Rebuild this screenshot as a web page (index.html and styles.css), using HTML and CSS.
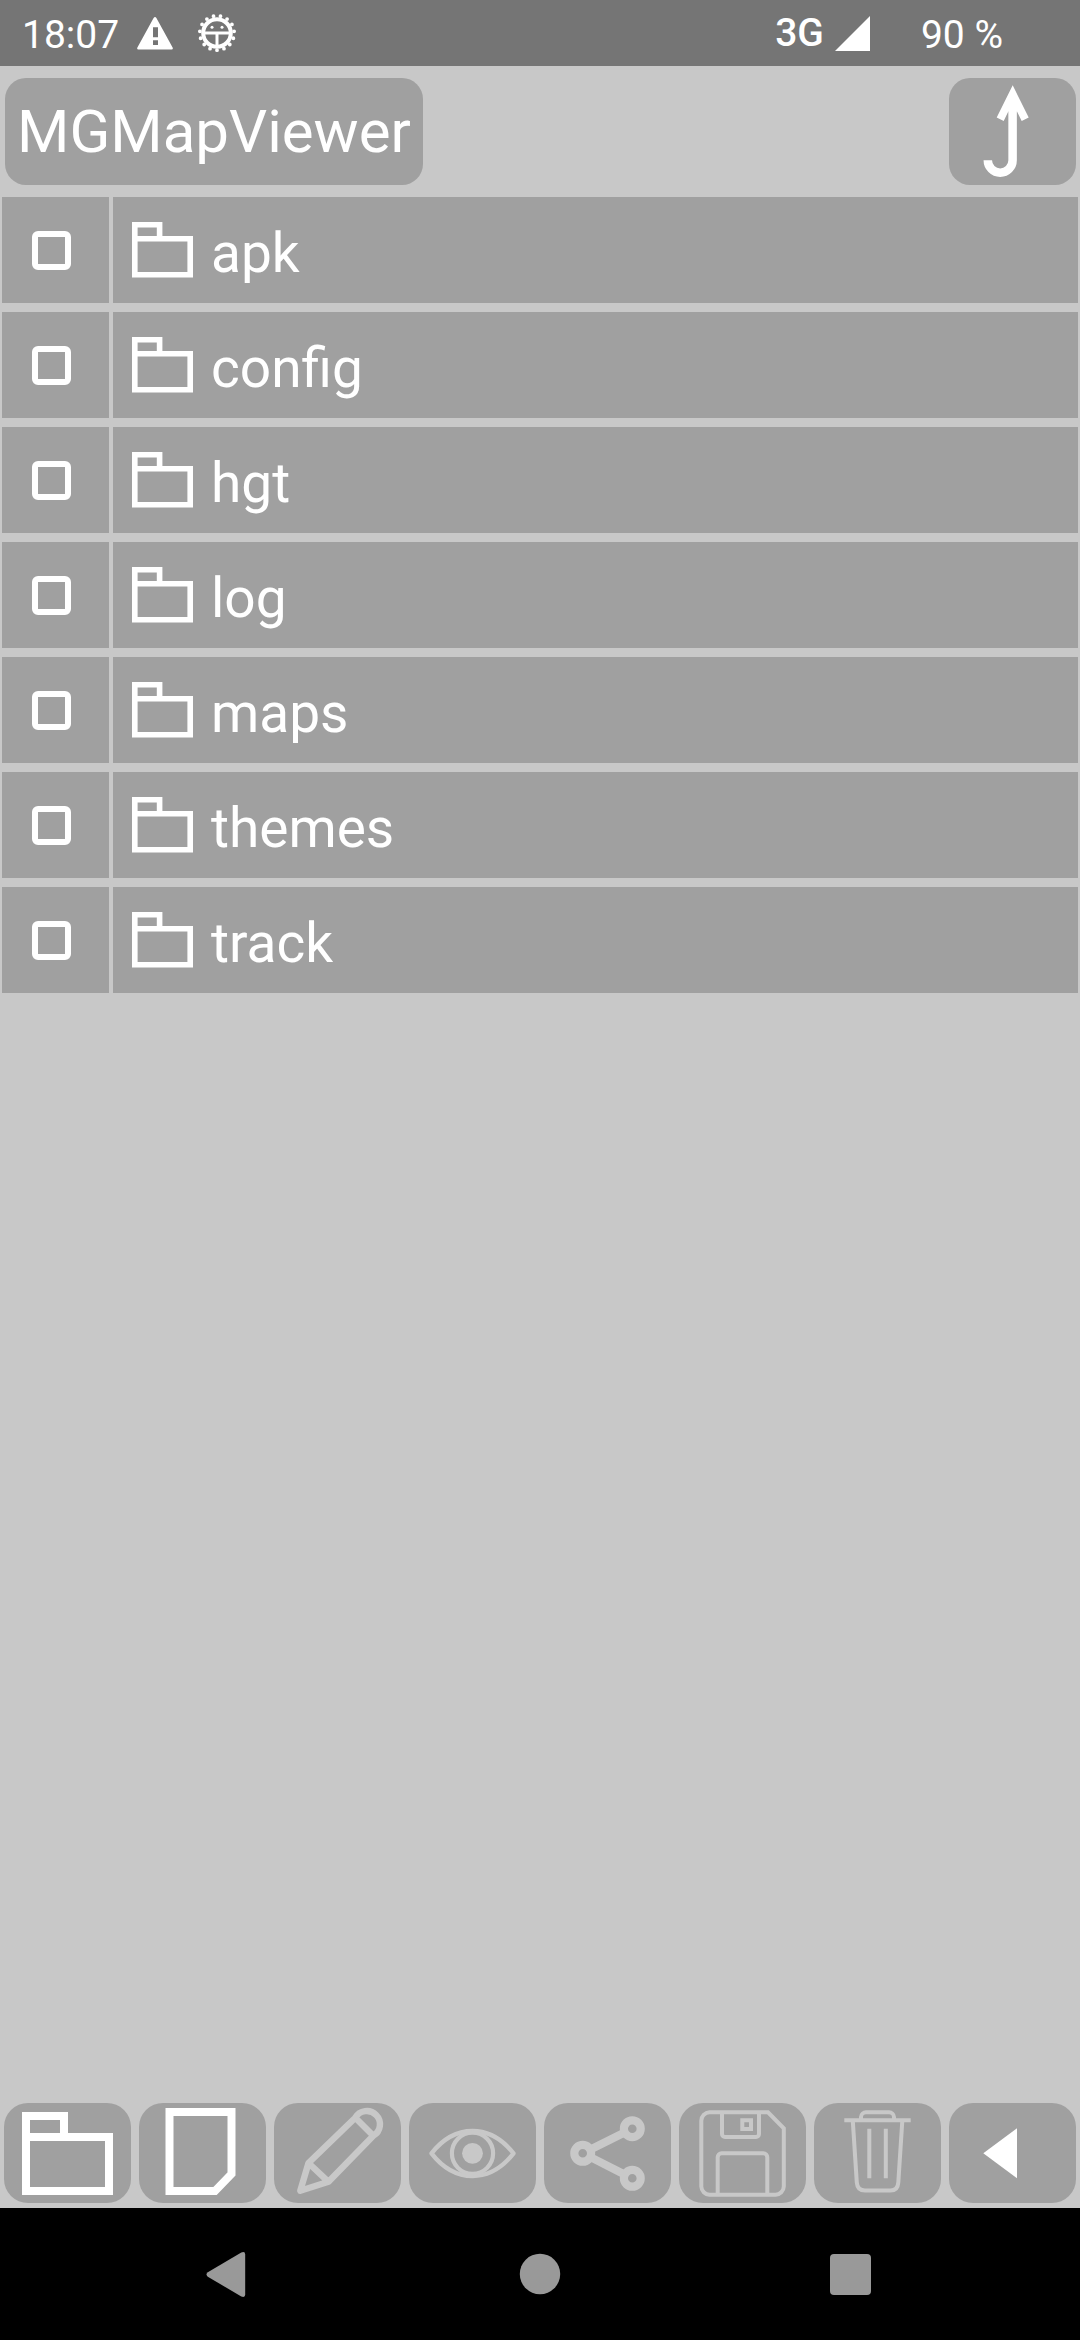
FILE: index.html
```
<!DOCTYPE html>
<html lang="en">
<head>
<meta charset="utf-8">
<meta name="viewport" content="width=device-width, initial-scale=1">
<title>MGMapViewer</title>
<link rel="stylesheet" href="styles.css">
</head>
<body>
<svg class="defs" aria-hidden="true">
  <symbol id="folder" viewBox="0 0 61 56">
    <path d="M2.8 2.8H27.6V16.8H58.2V52.8H2.8ZM2.8 16.8H27.6" fill="none" stroke="currentColor" stroke-width="5.6"/>
  </symbol>
</svg>

<header class="status">
  <span class="status-text">18:07</span>
  <svg class="warning" viewBox="0 0 36 33" aria-hidden="true">
    <path fill="#fff" fill-rule="evenodd" d="M16.6 1Q18 -1 19.4 1L35.6 30.5Q36.4 32.6 34.6 32.6H1.4Q-.4 32.6.4 30.5ZM16 10.300V20.300H21V10.300ZM16 23.300V28H21V23.300Z"/>
  </svg>
  <svg class="gear" viewBox="0 0 40 40" aria-hidden="true">
    <g fill="none" stroke="#fff">
      <circle cx="20" cy="20" r="13.800" stroke-width="4"/>
      <circle cx="20" cy="20" r="17.200" stroke-width="3.800" stroke-linecap="round" pathLength="15" stroke-dasharray="0 1" transform="rotate(90 20 20)"/>
      <path d="M7 19.900H33M20 20V33" stroke-width="3"/>
    </g>
    <circle cx="15" cy="14.300" r="1.500" fill="#fff"/>
    <circle cx="25" cy="14.300" r="1.500" fill="#fff"/>
  </svg>
  <span class="network">3G</span>
  <svg class="signal" viewBox="0 0 35 35" aria-hidden="true"><path fill="#fff" d="M35 0V35H0Z"/></svg>
  <span class="status-text battery">90 %</span>
</header>

<div class="toolbar">
  <button class="btn path" type="button">MGMapViewer</button>
  <button class="btn up" type="button" aria-label="Parent folder">
    <svg viewBox="0 0 127 107">
      <path d="M38.800 82.300A12.400 12.400 0 0 0 63.600 82.300V30" fill="none" stroke="#fff" stroke-width="8.500"/>
      <path fill="#fff" d="M63.700 7.300L79.700 39.600L72.700 43L68 33.500H59.300L54.700 43L47.700 39.600Z"/>
    </svg>
  </button>
</div>

<main>
  <ul class="files">
    <li><label class="pick"><input type="checkbox" aria-label="Select apk"></label><button class="entry" type="button"><svg><use href="#folder"/></svg><span>apk</span></button></li>
    <li><label class="pick"><input type="checkbox" aria-label="Select config"></label><button class="entry" type="button"><svg><use href="#folder"/></svg><span>config</span></button></li>
    <li><label class="pick"><input type="checkbox" aria-label="Select hgt"></label><button class="entry" type="button"><svg><use href="#folder"/></svg><span>hgt</span></button></li>
    <li><label class="pick"><input type="checkbox" aria-label="Select log"></label><button class="entry" type="button"><svg><use href="#folder"/></svg><span>log</span></button></li>
    <li><label class="pick"><input type="checkbox" aria-label="Select maps"></label><button class="entry" type="button"><svg><use href="#folder"/></svg><span>maps</span></button></li>
    <li><label class="pick"><input type="checkbox" aria-label="Select themes"></label><button class="entry" type="button"><svg><use href="#folder"/></svg><span>themes</span></button></li>
    <li><label class="pick"><input type="checkbox" aria-label="Select track"></label><button class="entry" type="button"><svg><use href="#folder"/></svg><span>track</span></button></li>
  </ul>
</main>

<div class="actions" role="toolbar" aria-label="File actions">
  <button class="btn" type="button" aria-label="New folder">
    <svg viewBox="0 0 127 100"><path d="M22 13H60V34H105V88H22ZM22 34H60" stroke-width="8"/></svg>
  </button>
  <button class="btn" type="button" aria-label="New file">
    <svg viewBox="0 0 127 100"><path d="M30.500 9H92.500V71L76 88H30.500Z" stroke-width="8"/></svg>
  </button>
  <button class="btn" type="button" aria-label="Edit" disabled>
    <svg viewBox="0 0 127 100"><path d="M26.300 87.700L34.500 60L81.300 14.700A13.200 13.200 0 1 1 99.300 32.700L54.500 78.800ZM34.500 60L54.500 78.800M81.300 14.700L99.300 32.700" stroke-width="6.400" stroke-linejoin="round"/></svg>
  </button>
  <button class="btn" type="button" aria-label="View" disabled>
    <svg viewBox="0 0 127 100"><path d="M22.500 50.300C46 20.500 81 20.500 104.500 50.300C81 80.500 46 80.500 22.500 50.300Z" stroke-width="4.400" stroke-linejoin="round"/><circle cx="63.500" cy="50.300" r="20.600" stroke-width="4.200"/><circle cx="63.500" cy="50.300" r="10.400" class="solid"/></svg>
  </button>
  <button class="btn" type="button" aria-label="Share" disabled>
    <svg viewBox="0 0 127 100"><path d="M80.800 29.400L46.200 46.600M46.200 54L80.800 71.600" stroke-width="8"/><g stroke-width="8.200"><circle cx="38.700" cy="50.300" r="8.400"/><circle cx="88.300" cy="25.700" r="8.400"/><circle cx="88.300" cy="75.300" r="8.400"/></g></svg>
  </button>
  <button class="btn" type="button" aria-label="Save" disabled>
    <svg viewBox="0 0 127 100"><path d="M89 9.300H30.500A8.500 8.500 0 0 0 22.300 17.800V83.500A8.500 8.500 0 0 0 30.500 91.700H96.500A8.500 8.500 0 0 0 104.800 83.500V25.300ZM43 9.300V31A3 3 0 0 0 46 34H77A3 3 0 0 0 80 31V9.300M38.700 91.700V54.300A4 4 0 0 1 42.700 50.300H84.300A4 4 0 0 1 88.300 54.300V91.700M63.300 17.300H72V26H63.300Z" stroke-width="4"/></svg>
  </button>
  <button class="btn" type="button" aria-label="Delete" disabled>
    <svg viewBox="0 0 127 100"><path d="M30.300 17.300H96.700M47 17.300V14A5 5 0 0 1 52 9.300H75A5 5 0 0 1 80 14V17.300M38.800 18L42.800 79.500Q43.500 87.600 51 87.600H76.500Q83.700 87.600 84.300 79.500L88.300 18M55.300 25.700V75.300M71.800 25.700V75.300" stroke-width="4"/></svg>
  </button>
  <button class="btn" type="button" aria-label="Back">
    <svg viewBox="0 0 127 100"><path class="solid" d="M34.300 50.300L68 25.300V75.300Z"/></svg>
  </button>
</div>

<nav class="system" aria-label="System navigation">
  <button type="button" aria-label="System back"><svg viewBox="0 0 46 46"><path d="M1.800 21.300L35.300 1.500Q39.200 0 39.200 3.500V43.500Q39.200 47 35.300 45.500L1.800 25.700Q-.8 23.500 1.800 21.300Z"/></svg></button>
  <button type="button" aria-label="Home"><svg viewBox="0 0 46 46"><circle cx="23" cy="23" r="20.200"/></svg></button>
  <button type="button" aria-label="Recent apps"><svg viewBox="0 0 46 46"><rect x="2" y="3" width="41" height="41" rx="4"/></svg></button>
</nav>
</body>
</html>
```
FILE: styles.css
```
* {
  box-sizing: border-box;
}

body {
  margin: 0;
  min-height: 100vh;
  display: flex;
  flex-direction: column;
  background: #c8c8c8;
  color: #fff;
  font-family: Roboto, sans-serif;
}

svg {
  display: block;
  flex: none;
}

button {
  margin: 0;
  padding: 0;
  border: 0;
  color: inherit;
  font: inherit;
}

.defs {
  position: absolute;
  width: 0;
  height: 0;
}

/* Status bar */
.status {
  display: flex;
  align-items: center;
  height: 66px;
  padding: 0 77px 0 22px;
  background: #757575;
  font-size: 39px;
}

.status-text {
  padding-top: 3px;
}

.warning {
  width: 36px;
  height: 33px;
  margin-left: 18px;
}

.gear {
  width: 40px;
  height: 40px;
  margin-left: 24px;
}

.network {
  margin-left: auto;
  font-weight: 500;
}

.signal {
  width: 35px;
  height: 35px;
  margin-left: 11px;
}

.battery {
  margin-left: 51px;
}

/* Path bar */
.toolbar {
  display: flex;
  justify-content: space-between;
  padding: 12px 4px;
}

.btn {
  height: 100px;
  border-radius: 24px;
  background: #a0a0a0;
  overflow: hidden;
}

.toolbar .btn {
  height: 107px;
  border-radius: 21px;
}

.path {
  margin-left: 1px;
  padding: 0 12px;
  font-size: 60px;
}

.up {
  width: 127px;
}

.up svg {
  height: 107px;
  width: 100%;
}

/* File list */
main {
  flex: 1;
}

.files {
  display: grid;
  gap: 9px;
  margin: 0;
  padding: 0 2px;
  list-style: none;
}

.files li {
  display: grid;
  grid-template-columns: 107px 1fr;
  gap: 4px;
  height: 106px;
}

.pick {
  display: flex;
  align-items: center;
  padding-left: 30px;
  background: #a0a0a0;
}

.pick input {
  appearance: none;
  width: 39px;
  height: 39px;
  margin: 0;
  border: 6px solid #fff;
  border-radius: 6px;
}

.pick input:checked {
  background: #fff;
}

.entry {
  display: flex;
  align-items: center;
  gap: 18px;
  padding-left: 19px;
  background: #a0a0a0;
  font-size: 55px;
  text-align: left;
}

.entry svg {
  width: 61px;
  height: 56px;
}

.entry span {
  padding-top: 6px;
}

/* Action bar */
.actions {
  display: grid;
  grid-template-columns: repeat(8, 1fr);
  gap: 8px;
  padding: 0 4px 5px;
}

.actions svg {
  width: 100%;
  height: 100px;
  fill: none;
  stroke: #fff;
}

.actions .solid {
  fill: #fff;
  stroke: none;
}

.actions :disabled svg {
  stroke: #c8c8c8;
}

.actions :disabled .solid {
  fill: #c8c8c8;
}

/* System navigation */
.system {
  display: grid;
  grid-template-columns: repeat(3, 1fr);
  justify-items: center;
  align-items: center;
  height: 132px;
  padding: 0 74px;
  background: #000;
}

.system button {
  background: none;
}

.system svg {
  width: 46px;
  height: 46px;
  fill: #999;
}
```
